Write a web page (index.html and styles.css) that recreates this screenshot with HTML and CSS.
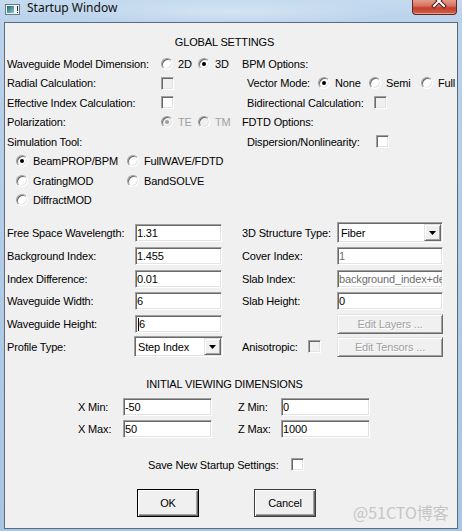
FILE: index.html
```html
<!DOCTYPE html>
<html>
<head>
<meta charset="utf-8">
<link rel="stylesheet" href="styles.css">
</head>
<body>
<div class="window">
  <div class="titlebar">
    <svg class="app-icon" width="15" height="11" viewBox="0 0 15 11">
      <defs>
        <linearGradient id="tg" x1="0" y1="0" x2="1" y2="1">
          <stop offset="0" stop-color="#1d6676"/>
          <stop offset="1" stop-color="#8fc6cf"/>
        </linearGradient>
      </defs>
      <rect x="0.5" y="0.5" width="14" height="10" fill="#eef3f6" stroke="#6a7a88"/>
      <rect x="2" y="2" width="7" height="7" fill="url(#tg)"/>
      <rect x="12" y="2" width="1" height="5" fill="#2a2a2a"/>
      <rect x="12" y="8" width="1" height="1" fill="#2a2a2a"/>
    </svg>
    <span class="title">Startup Window</span>
    <div class="close">
      <svg width="45" height="15" viewBox="0 0 45 15">
        <path d="M21 -3 L31 7 M31 -3 L21 7" stroke="#4a1c18" stroke-width="4" stroke-linecap="square" fill="none"/>
        <path d="M21 -3 L31 7 M31 -3 L21 7" stroke="#ffffff" stroke-width="2" stroke-linecap="square" fill="none"/>
      </svg>
    </div>
  </div>

  <div class="client">
    <div class="heading">GLOBAL SETTINGS</div>

    <div class="top">
      <div class="col">
        <div class="row">
          <span class="lbl w154">Waveguide Model Dimension:</span>
          <div class="opts dims">
            <span class="radio"><i class="rb"></i>2D</span>
            <span class="radio"><i class="rb on"></i>3D</span>
          </div>
        </div>
        <div class="row">
          <span class="lbl w154">Radial Calculation:</span>
          <i class="cb dis"></i>
        </div>
        <div class="row">
          <span class="lbl w154">Effective Index Calculation:</span>
          <i class="cb"></i>
        </div>
        <div class="row">
          <span class="lbl w154">Polarization:</span>
          <div class="opts dims">
            <span class="radio dis"><i class="rb on"></i>TE</span>
            <span class="radio dis"><i class="rb"></i>TM</span>
          </div>
        </div>
        <div class="row">
          <span class="lbl">Simulation Tool:</span>
        </div>
        <div class="row tools">
          <span class="radio"><i class="rb on"></i>BeamPROP/BPM</span>
          <span class="radio"><i class="rb"></i>FullWAVE/FDTD</span>
        </div>
        <div class="row tools">
          <span class="radio"><i class="rb"></i>GratingMOD</span>
          <span class="radio"><i class="rb"></i>BandSOLVE</span>
        </div>
        <div class="row tools">
          <span class="radio"><i class="rb"></i>DiffractMOD</span>
        </div>
      </div>

      <div class="col">
        <div class="row"><span class="lbl">BPM Options:</span></div>
        <div class="row indent">
          <span class="lbl w71">Vector Mode:</span>
          <div class="opts vector">
            <span class="radio"><i class="rb on"></i>None</span>
            <span class="radio"><i class="rb"></i>Semi</span>
            <span class="radio"><i class="rb"></i>Full</span>
          </div>
        </div>
        <div class="row indent">
          <span class="lbl w127">Bidirectional Calculation:</span>
          <i class="cb dis"></i>
        </div>
        <div class="row"><span class="lbl">FDTD Options:</span></div>
        <div class="row indent">
          <span class="lbl w129">Dispersion/Nonlinearity:</span>
          <i class="cb"></i>
        </div>
      </div>
    </div>

    <div class="fields">
      <div class="col">
        <div class="frow"><span class="lbl w128">Free Space Wavelength:</span><div class="edit w87">1.31</div></div>
        <div class="frow"><span class="lbl w128">Background Index:</span><div class="edit w87">1.455</div></div>
        <div class="frow"><span class="lbl w128">Index Difference:</span><div class="edit w87">0.01</div></div>
        <div class="frow"><span class="lbl w128">Waveguide Width:</span><div class="edit w87">6</div></div>
        <div class="frow"><span class="lbl w128">Waveguide Height:</span><div class="edit w87"><span class="caret"></span>6</div></div>
        <div class="frow"><span class="lbl w127">Profile Type:</span>
          <div class="select w89"><span class="sel-text">Step Index</span><span class="ddbtn"><i class="tri"></i></span></div>
        </div>
      </div>
      <div class="col">
        <div class="frow"><span class="lbl w95">3D Structure Type:</span>
          <div class="select w106"><span class="sel-text">Fiber</span><span class="ddbtn"><i class="tri"></i></span></div>
        </div>
        <div class="frow"><span class="lbl w95">Cover Index:</span><div class="edit w106 grey">1</div></div>
        <div class="frow"><span class="lbl w95">Slab Index:</span><div class="edit w106 grey">background_index+delta</div></div>
        <div class="frow"><span class="lbl w95">Slab Height:</span><div class="edit w106">0</div></div>
        <div class="frow"><span class="lbl w95"></span><div class="btn dis w106">Edit Layers ...</div></div>
        <div class="frow"><span class="lbl w66">Anisotropic:</span><i class="cb dis"></i><div class="btn dis w106 gap16">Edit Tensors ...</div></div>
      </div>
    </div>

    <div class="heading heading2">INITIAL VIEWING DIMENSIONS</div>

    <div class="xrows">
      <div class="xrow">
        <span class="lbl w45">X Min:</span><div class="edit w89">-50</div>
        <span class="lbl w43 zl">Z Min:</span><div class="edit w89">0</div>
      </div>
      <div class="xrow">
        <span class="lbl w45">X Max:</span><div class="edit w89">50</div>
        <span class="lbl w43 zl">Z Max:</span><div class="edit w89">1000</div>
      </div>
    </div>

    <div class="save-row">
      <span class="lbl">Save New Startup Settings:</span><i class="cb"></i>
    </div>

    <div class="buttons">
      <div class="btn push default">OK</div>
      <div class="btn push">Cancel</div>
    </div>

    <div class="watermark">@51CTO博客</div>
  </div>
</div>
</body>
</html>
```
FILE: styles.css
```css
* { box-sizing: border-box; }
html, body { margin: 0; padding: 0; }
body {
  width: 462px;
  height: 531px;
  overflow: hidden;
  font-family: "Liberation Sans", Arial, sans-serif;
  font-size: 11px;
  letter-spacing: -0.15px;
  color: #000;
}
i { font-style: normal; display: block; flex: none; }

.window {
  width: 462px;
  height: 531px;
  display: flex;
  flex-direction: column;
  background:
    radial-gradient(ellipse 160px 14px at 230px 12px, rgba(255,255,255,0.35), rgba(255,255,255,0)),
    linear-gradient(180deg, #c4daef 0, #bad2eb 22px, #a9c5e3 100%);
}

/* title bar */
.titlebar {
  height: 22px;
  display: flex;
  align-items: flex-start;
  flex: none;
}
.app-icon { margin: 4px 0 0 5px; flex: none; }
.title {
  margin-left: 7px;
  font-family: "Noto Sans", "Open Sans", sans-serif;
  font-size: 12px;
  line-height: 16px;
  letter-spacing: 0;
  color: #101010;
}
.close {
  margin-left: auto;
  margin-right: 5px;
  margin-top: -1px;
  width: 45px;
  height: 16px;
  border: 1px solid #5b2a24;
  border-top: none;
  border-radius: 0 0 4px 4px;
  background: linear-gradient(180deg, #e6a493 0%, #d87260 45%, #c43f2c 60%, #d2624c 100%);
  box-shadow: inset 0 -1px 0 rgba(255,200,180,0.6);
  overflow: hidden;
}
.close svg { display: block; }

/* client area */
.client {
  flex: 1;
  margin: 0 4px 2px 4px;
  border: 1px solid #5b6b7c;
  background: #f0f0f0;
  position: relative;
  padding-top: 9px;
}
.heading {
  width: 439px;
  height: 20px;
  line-height: 20px;
  text-align: center;
  white-space: nowrap;
}
.heading2 { margin-top: 15.6px; }

.lbl { display: block; flex: none; white-space: nowrap; }
.w43 { width: 43px; }
.w45 { width: 45px; }
.w66 { width: 66px; }
.w71 { width: 71px; }
.w87 { width: 87px; }
.w89 { width: 89px; }
.w95 { width: 95px; }
.w106 { width: 106px; }
.w127 { width: 127px; }
.w128 { width: 128px; }
.w129 { width: 129px; }
.w154 { width: 154px; }

/* top section */
.top {
  display: grid;
  grid-template-columns: 235px 1fr;
  margin-top: 2px;
  padding-left: 2px;
}
.row {
  height: 19.5px;
  display: flex;
  align-items: center;
  white-space: nowrap;
}
.indent { padding-left: 5px; }
.tools {
  display: grid;
  grid-template-columns: 111px auto;
  padding-left: 9px;
}
.opts { display: grid; align-items: center; }
.dims { grid-template-columns: 37px auto; }
.vector { grid-template-columns: 51px 52px auto; }

.radio {
  display: flex;
  align-items: center;
  white-space: nowrap;
}
.radio.dis { color: #a0a0a0; }
.rb {
  width: 12px;
  height: 12px;
  margin-right: 5px;
  border-radius: 50%;
  border: 1px solid;
  border-color: #a0a0a0 #ffffff #ffffff #a0a0a0;
  box-shadow: inset 1px 1px 0 #696969, inset -1px -1px 0 #e3e3e3;
  background: #fff;
  position: relative;
}
.rb.on::after {
  content: "";
  position: absolute;
  left: 3px;
  top: 3px;
  width: 4px;
  height: 4px;
  border-radius: 50%;
  background: #000;
}
.radio.dis .rb { background: #f0f0f0; }
.radio.dis .rb.on::after { background: #a0a0a0; }

.cb {
  width: 13px;
  height: 13px;
  border: 1px solid;
  border-color: #a0a0a0 #ffffff #ffffff #a0a0a0;
  box-shadow: inset 1px 1px 0 #696969, inset -1px -1px 0 #e3e3e3;
  background: #fff;
}
.cb.dis { background: #f0f0f0; }

/* fields section */
.fields {
  display: grid;
  grid-template-columns: 235px 1fr;
  margin-top: 11.6px;
  padding-left: 2px;
}
.frow {
  height: 22.8px;
  display: flex;
  align-items: center;
}
.edit {
  flex: none;
  height: 18px;
  border: 1px solid;
  border-color: #a0a0a0 #ffffff #ffffff #a0a0a0;
  box-shadow: inset 1px 1px 0 #696969, inset -1px -1px 0 #e3e3e3;
  background: #fff;
  padding-left: 1px;
  line-height: 16px;
  white-space: nowrap;
  overflow: hidden;
  display: flex;
  align-items: center;
}
.edit.grey { color: #6d6d6d; }
.caret {
  display: block;
  width: 1px;
  height: 13px;
  background: #000;
  margin-right: 0;
  margin-left: 1px;
  flex: none;
}

.select {
  flex: none;
  height: 21px;
  border: 1px solid;
  border-color: #a0a0a0 #ffffff #ffffff #a0a0a0;
  box-shadow: inset 1px 1px 0 #696969, inset -1px -1px 0 #e3e3e3;
  background: #fff;
  padding: 1px;
  display: flex;
  align-items: center;
}
.sel-text { flex: 1; padding-left: 2px; white-space: nowrap; overflow: hidden; }
.ddbtn {
  width: 17px;
  height: 17px;
  flex: none;
  background: #f0f0f0;
  border: 1px solid;
  border-color: #e3e3e3 #696969 #696969 #e3e3e3;
  box-shadow: inset 1px 1px 0 #fff, inset -1px -1px 0 #a0a0a0;
  display: flex;
  align-items: center;
  justify-content: center;
}
.tri {
  width: 7px;
  height: 4px;
  background: #000;
  clip-path: polygon(0 0, 100% 0, 50% 100%);
}

.btn {
  flex: none;
  height: 20px;
  border: 1px solid;
  border-color: #e3e3e3 #696969 #696969 #e3e3e3;
  box-shadow: inset 1px 1px 0 #fff, inset -1px -1px 0 #a0a0a0;
  background: #f0f0f0;
  display: flex;
  align-items: center;
  justify-content: center;
  white-space: nowrap;
}
.btn.dis { color: #a0a0a0; text-shadow: 1px 1px 0 #fff; }
.gap16 { margin-left: 16px; }

/* viewing dimensions */
.xrows { margin-top: 1.75px; padding-left: 73px; }
.xrow {
  height: 22.5px;
  display: flex;
  align-items: center;
}
.zl { margin-left: 26px; }

.save-row {
  margin-top: 14.25px;
  height: 20px;
  display: flex;
  align-items: center;
  padding-left: 143px;
}
.save-row .cb { margin-left: 12px; }

.buttons {
  margin-top: 14px;
  display: flex;
  padding-left: 132px;
  gap: 55px;
}
.btn.push {
  width: 62px;
  height: 28px;
  border: 1px solid #3c3c3c;
  box-shadow: inset 1px 1px 0 #fff, inset -1px -1px 0 #696969, inset -2px -2px 0 #a0a0a0;
}
.btn.push.default { border-color: #000; }

.watermark {
  position: absolute;
  left: 348px;
  bottom: 7px;
  font-family: "Noto Sans CJK SC", "Noto Sans", sans-serif;
  font-size: 16px;
  line-height: 18px;
  letter-spacing: 0;
  color: #c6c6c6;
  white-space: nowrap;
}
```
